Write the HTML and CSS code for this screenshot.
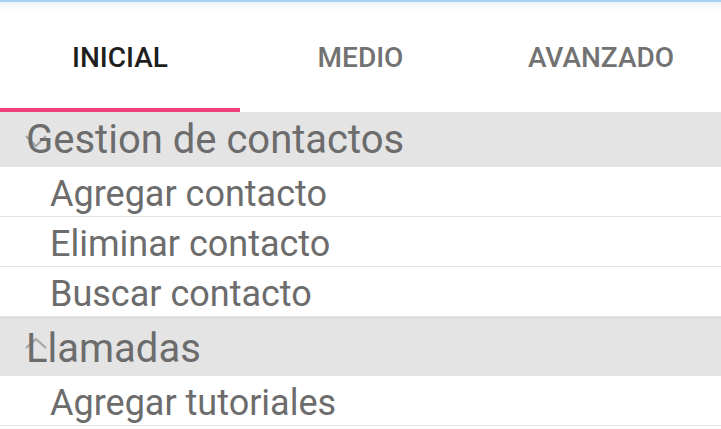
FILE: index.html
```html
<!DOCTYPE html>
<html lang="es">
<head>
<meta charset="utf-8">
<title>Tutoriales</title>
<link rel="stylesheet" href="styles.css">
</head>
<body>
<div class="screen">
  <div class="topline"></div>
  <nav class="tabs">
    <div class="tab active">INICIAL</div>
    <div class="tab">MEDIO</div>
    <div class="tab">AVANZADO</div>
  </nav>
  <div class="list">
    <div class="group">
      <svg class="chev" width="24" height="14" viewBox="0 0 24 14"><polyline points="2,2 12,12 22,2" fill="none" stroke="#a3a3a3" stroke-width="2"/></svg>
      <span class="label">Gestion de contactos</span>
    </div>
    <div class="item">Agregar contacto</div>
    <div class="item">Eliminar contacto</div>
    <div class="item">Buscar contacto</div>
    <div class="group group-second">
      <svg class="chev chev-up" width="24" height="14" viewBox="0 0 24 14"><polyline points="2,11 12,2 22,11" fill="none" stroke="#a3a3a3" stroke-width="2"/></svg>
      <span class="label">Llamadas</span>
    </div>
    <div class="item">Agregar tutoriales</div>
  </div>
</div>
</body>
</html>
```
FILE: styles.css
```css
html, body {
  margin: 0;
  padding: 0;
  background: #ffffff;
}

.screen {
  width: 721px;
  height: 429px;
  overflow: hidden;
  font-family: Roboto, "Noto Sans", "Liberation Sans", sans-serif;
  background: #ffffff;
}

.topline {
  height: 2px;
  background: #a9d1f0;
}

.tabs {
  display: grid;
  grid-template-columns: 240px 241px 240px;
  height: 110px;
  background: linear-gradient(#eef2f6 0px, #ffffff 9px);
}

.tab {
  display: flex;
  align-items: center;
  justify-content: center;
  box-sizing: border-box;
  padding-top: 5px;
  border-bottom: 4px solid transparent;
  font-size: 28px;
  font-weight: 500;
  color: #727272;
}

.tab.active {
  color: #1f1f1f;
  border-bottom-color: #ef3f7a;
}

.list {
  display: flex;
  flex-direction: column;
}

.group {
  position: relative;
  display: flex;
  align-items: center;
  box-sizing: border-box;
  height: 55px;
  padding-left: 26px;
  background: #e4e4e4;
  font-size: 40px;
  color: #6c6c6c;
}

.group-second {
  height: 59px;
  border-top: 2px solid #dddddd;
  padding-top: 2px;
}

.chev {
  position: absolute;
  left: 24px;
  top: 22px;
}

.chev-up {
  top: 18px;
}

.label {
  position: relative;
}

.item {
  display: flex;
  align-items: center;
  box-sizing: border-box;
  height: 50px;
  padding-left: 50px;
  padding-top: 4px;
  border-bottom: 1.5px solid #e3e3e3;
  font-size: 36px;
  color: #6c6c6c;
}
```
